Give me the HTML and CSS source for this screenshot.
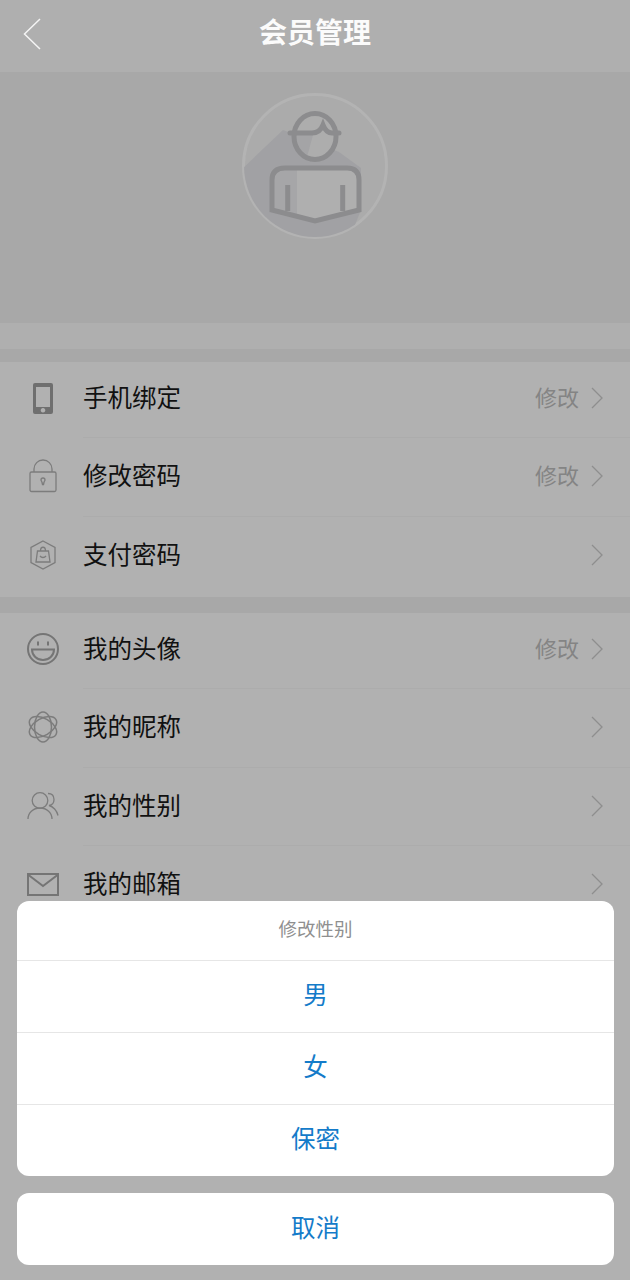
FILE: index.html
```html
<!DOCTYPE html>
<html lang="zh">
<head>
<meta charset="utf-8">
<title>会员管理</title>
<link rel="stylesheet" href="styles.css">
</head>
<body>
<div class="page">
  <header class="topbar">
    <svg class="back" width="20" height="34" viewBox="0 0 20 34"><path d="M17 1 1.500 16 17 31" fill="none" stroke="#f4f4f4" stroke-width="1.5"/></svg>
    <h1 class="title">会员管理</h1>
  </header>
  <section class="hero">
    <svg class="avatar" width="148" height="148" viewBox="0 0 148 148">
      <defs><clipPath id="disc"><circle cx="74" cy="74" r="71"/></clipPath></defs>
      <circle cx="74" cy="74" r="71.500" fill="#ababab" stroke="#b3b3b3" stroke-width="3"/>
      <polygon points="42,38 0,78 0,148 108,148 120,118 120,76 98,60" fill="#a1a1a4" clip-path="url(#disc)"/>
      <path d="M44 76h62q12 0 12 12v30l-44 11-43-11V88q0-12 13-12Z" fill="#afafaf"/>
      <path d="M44 76h12v48l-25-6V88q0-12 13-12Z" fill="#a6a6a8"/>
      <circle cx="74" cy="45" r="23" fill="#adadad"/>
      <path d="M52 43h20l-6 22q-12-6-14-22Z" fill="#a4a4a6"/>
      <g fill="none" stroke="#8c8c8e" stroke-width="5">
        <ellipse cx="74" cy="44.500" rx="21" ry="23"/>
        <path d="M49 41h22c5 0 9-3 11-8 2 5 5 8 9 8h7" stroke-linecap="round"/>
        <path d="M118 118V88q0-12-12-12H44q-13 0-13 12v30l43 11Z"/>
        <path d="M46.700 93v26M101.700 93v26"/>
      </g>
    </svg>
  </section>
  <div class="band"></div>
  <div class="gap gap-first"></div>
  <ul class="group">
    <li class="row">
      <span class="icon"><svg width="20" height="31" viewBox="0 0 20 31"><path fill-rule="evenodd" d="M2 0h16q2 0 2 2v27q0 2-2 2H2q-2 0-2-2V2q0-2 2-2Zm1 4v20h14V4ZM10 25a2.300 2.300 0 1 0 .01 0Z" fill="#6f6f6f"/></svg></span>
      <span class="label">手机绑定</span>
      <span class="action">修改</span>
      <svg class="chev" width="14" height="22" viewBox="0 0 14 22"><path d="m2 1 10 10L2 21" fill="none" stroke="#8e8e8e" stroke-width="1.3"/></svg>
    </li>
    <li class="row">
      <span class="icon"><svg width="28" height="34" viewBox="0 0 28 34"><g fill="none" stroke="#7c7c7c" stroke-width="1.300"><rect x="1" y="13" width="26" height="19.500" rx="1.500"/><path d="M5 13V10a9 9 0 0 1 18 0v3"/><path d="M12 21a2 2 0 1 1 4 0c0 1-1 1.500-1 2.500l-.5 2h-1l-.5-2c0-1-1-1.500-1-2.500Z"/></g></svg></span>
      <span class="label">修改密码</span>
      <span class="action">修改</span>
      <svg class="chev" width="14" height="22" viewBox="0 0 14 22"><path d="m2 1 10 10L2 21" fill="none" stroke="#8e8e8e" stroke-width="1.3"/></svg>
    </li>
    <li class="row">
      <span class="icon"><svg width="28" height="30" viewBox="0 0 28 30"><g fill="none" stroke="#7c7c7c" stroke-width="1.300"><path d="M14 1 26 7.500v15L14 29 2 22.500v-15Z"/><path d="M8.500 11h11l1.500 11H7Z"/><path d="M11.500 11c0-5 5-5 5 0"/><path d="M11 16c1.500 2 4.500 2 6 0"/></g></svg></span>
      <span class="label">支付密码</span>
      <svg class="chev" width="14" height="22" viewBox="0 0 14 22"><path d="m2 1 10 10L2 21" fill="none" stroke="#8e8e8e" stroke-width="1.3"/></svg>
    </li>
  </ul>
  <div class="gap gap-second"></div>
  <ul class="group">
    <li class="row">
      <span class="icon"><svg width="32" height="32" viewBox="0 0 32 32"><g fill="none" stroke="#757575" stroke-width="2"><circle cx="16" cy="16" r="15"/><path d="M5 16.500h22c0 6-5 10.500-11 10.500S5 22.500 5 16.500Z"/><path d="M11 8.500v4M21 8.500v4"/></g></svg></span>
      <span class="label">我的头像</span>
      <span class="action">修改</span>
      <svg class="chev" width="14" height="22" viewBox="0 0 14 22"><path d="m2 1 10 10L2 21" fill="none" stroke="#8e8e8e" stroke-width="1.3"/></svg>
    </li>
    <li class="row">
      <span class="icon"><svg width="30" height="32" viewBox="0 0 30 32"><g fill="none" stroke="#7c7c7c" stroke-width="1.500"><ellipse cx="15" cy="16" rx="8.500" ry="15"/><ellipse cx="15" cy="16" rx="8.500" ry="15" transform="rotate(60 15 16)"/><ellipse cx="15" cy="16" rx="8.500" ry="15" transform="rotate(120 15 16)"/></g></svg></span>
      <span class="label">我的昵称</span>
      <svg class="chev" width="14" height="22" viewBox="0 0 14 22"><path d="m2 1 10 10L2 21" fill="none" stroke="#8e8e8e" stroke-width="1.3"/></svg>
    </li>
    <li class="row">
      <span class="icon"><svg width="32" height="28" viewBox="0 0 32 28"><g fill="none" stroke="#7c7c7c" stroke-width="1.300"><circle cx="13" cy="8.500" r="7.800"/><path d="M1 27c0-6 5-11 12-11s12 5 12 11"/><path d="M21 1.500c4 0 6 2.500 6 6s-2 5.500-5 6c4 1 8 5 9 10"/></g></svg></span>
      <span class="label">我的性别</span>
      <svg class="chev" width="14" height="22" viewBox="0 0 14 22"><path d="m2 1 10 10L2 21" fill="none" stroke="#8e8e8e" stroke-width="1.3"/></svg>
    </li>
    <li class="row">
      <span class="icon"><svg width="32" height="23" viewBox="0 0 32 23"><g fill="none" stroke="#757575" stroke-width="2"><rect x="1" y="1" width="30" height="21"/><path d="m1.500 2 14.500 11L30.500 2"/></g></svg></span>
      <span class="label">我的邮箱</span>
      <svg class="chev" width="14" height="22" viewBox="0 0 14 22"><path d="m2 1 10 10L2 21" fill="none" stroke="#8e8e8e" stroke-width="1.3"/></svg>
    </li>
  </ul>
  <div class="sheet">
    <div class="card">
      <div class="sheet-title">修改性别</div>
      <div class="option">男</div>
      <div class="option">女</div>
      <div class="option">保密</div>
    </div>
    <div class="card">
      <div class="option cancel">取消</div>
    </div>
  </div>
</div>
</body>
</html>
```
FILE: styles.css
```css
* { box-sizing: border-box; }
html, body { margin: 0; padding: 0; }
body { font-family: "Noto Sans CJK SC", "Liberation Sans", sans-serif; background: #b1b1b1; }
.page { position: relative; width: 630px; height: 1280px; overflow: hidden; background: #b1b1b1; }
.topbar { position: relative; height: 72px; background: #afafaf; display: flex; align-items: center; justify-content: center; }
.back { position: absolute; left: 23px; top: 18px; }
.title { margin: 0 0 10px; font-size: 28px; line-height: 40px; font-weight: 700; color: #fbfbfb; }
.hero { height: 251px; background: #a8a8a8; display: flex; justify-content: center; align-items: flex-start; padding-top: 20px; }
.avatar { display: block; }
.band { height: 26px; background: #afafaf; }
.gap { background: #a8a8a8; }
.gap-first { height: 13px; }
.gap-second { height: 16px; }
.group { list-style: none; margin: 0; padding: 0 0 3px; background: #b1b1b1; }
.row { position: relative; height: 78.500px; display: flex; align-items: center; padding-right: 26px; }
.row:first-child { height: 75px; padding-bottom: 3px; }
.row + .row::before { content: ""; position: absolute; left: 83px; right: 0; top: 0; height: 1px; background: #acacac; }
.icon { width: 83px; padding-left: 3px; flex: none; display: flex; justify-content: center; }
.icon svg { display: block; flex: none; }
.label { flex: 1; font-size: 24.500px; line-height: 34px; padding-bottom: 2px; color: #111111; }
.action { font-size: 22px; line-height: 34px; padding-bottom: 4px; color: #848484; margin-right: 11px; }
.chev { display: block; flex: none; }
.sheet { position: absolute; left: 17px; right: 16px; top: 901px; display: flex; flex-direction: column; gap: 17px; }
.card { background: #ffffff; border-radius: 12px; overflow: hidden; }
.sheet-title { height: 59px; display: flex; align-items: center; justify-content: center; padding-bottom: 6px; font-size: 18.500px; color: #8f8f8f; }
.option { height: 72px; border-top: 1px solid #e6e6e6; display: flex; align-items: center; justify-content: center; padding-bottom: 6px; font-size: 24.500px; color: #147bc9; }
.cancel { border-top: 0; }
```
